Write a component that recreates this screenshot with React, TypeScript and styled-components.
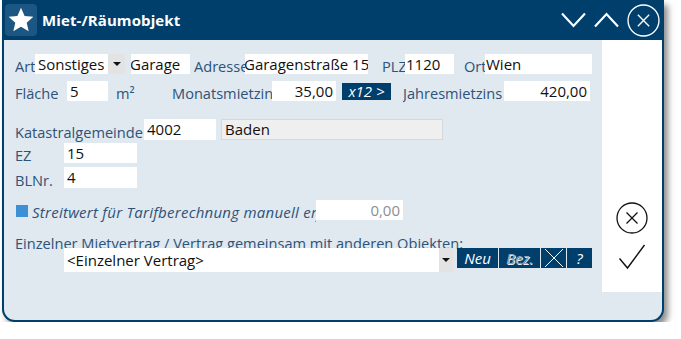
import styled, { createGlobalStyle } from "styled-components";

const GlobalStyle = createGlobalStyle`
  html, body {
    margin: 0;
    padding: 0;
    background: #ffffff;
  }
  body {
    font-family: "Open Sans", "DejaVu Sans", sans-serif;
  }
`;

const Page = styled.div`
  padding: 0 0 0 2px;
`;

const Window = styled.div`
  width: 658px;
  height: 320px;
  display: flex;
  flex-direction: column;
  background: #e0e8f0;
  border: 2px solid #003e6b;
  border-top: 0;
  border-radius: 0 0 13px 13px;
  box-shadow: 4px 5px 6px rgba(0, 0, 0, 0.45);
  overflow: hidden;
`;

const TitleBar = styled.div`
  height: 40px;
  flex: none;
  display: flex;
  align-items: center;
  background: #003e6b;
  padding: 0 2px 0 1px;
  color: #ffffff;
`;

const StarBox = styled.div`
  width: 32px;
  height: 32px;
  border-radius: 4px;
  background: #1c5683;
  display: flex;
  align-items: center;
  justify-content: center;
`;

const Title = styled.h1`
  margin: 0 0 0 5px;
  flex: 1;
  font-size: 15px;
  font-weight: 700;
  letter-spacing: 0.1px;
`;

const Controls = styled.div`
  display: flex;
  align-items: center;
  gap: 8px;
`;

const Body = styled.div`
  flex: 1;
  display: flex;
`;

const Form = styled.div`
  flex: 1;
  padding: 14px 0 0 11px;
  display: flex;
  flex-direction: column;
`;

const Side = styled.div`
  width: 60px;
  height: 252px;
  background: #ffffff;
  display: flex;
  flex-direction: column;
  align-items: center;
  padding-top: 162px;
  box-sizing: border-box;
  gap: 10px;
`;

const Row = styled.div<{ $mt?: number; $h?: number; $top?: boolean }>`
  display: flex;
  align-items: ${p => (p.$top ? "flex-start" : "center")};
  gap: ${p => (p.$top ? "1px" : "0")};
  height: ${p => p.$h ?? 20}px;
  margin-top: ${p => p.$mt ?? 0}px;
`;

const Label = styled.span<{ $w: number; $ml?: number; $italic?: boolean }>`
  width: ${p => p.$w}px;
  margin-left: ${p => p.$ml ?? 0}px;
  flex: none;
  overflow: hidden;
  white-space: nowrap;
  font-size: ${p => (p.$italic ? "15px" : "14.6px")};
  letter-spacing: ${p => (p.$italic ? "0.25px" : "0")};
  line-height: 20px;
  padding-top: 4px;
  color: #2d5378;
  font-style: ${p => (p.$italic ? "italic" : "normal")};
`;

const Field = styled.div<{
  $w: number;
  $ml?: number;
  $right?: boolean;
  $indent?: number;
  $muted?: boolean;
  $dim?: boolean;
  $h?: number;
}>`
  width: ${p => p.$w}px;
  height: ${p => p.$h ?? 20}px;
  margin-left: ${p => p.$ml ?? 0}px;
  flex: none;
  box-sizing: border-box;
  background: ${p => (p.$muted ? "#efefef" : "#ffffff")};
  border: ${p => (p.$muted ? "1px solid #d4d9de" : "0")};
  overflow: hidden;
  white-space: nowrap;
  font-size: 15px;
  line-height: ${p => (p.$h ?? 20) - (p.$muted ? 2 : 0)}px;
  color: ${p => (p.$dim ? "#8a8f95" : "#111111")};
  text-align: ${p => (p.$right ? "right" : "left")};
  padding: 0 3px;
  text-indent: ${p => p.$indent ?? 0}px;
`;

const Select = styled.div<{ $w: number; $h: number; $ml?: number }>`
  width: ${p => p.$w}px;
  height: ${p => p.$h}px;
  line-height: ${p => p.$h}px;
  margin-left: ${p => p.$ml ?? 0}px;
  flex: none;
  display: flex;
  background: #ffffff;
  font-size: 15px;
  color: #111111;
  position: relative;
  z-index: 1;
`;

const SelectText = styled.div`
  flex: 1;
  padding-left: 3px;
  white-space: nowrap;
  overflow: hidden;
`;

const DropButton = styled.div<{ $w: number }>`
  width: ${p => p.$w}px;
  background: #e3e3e3;
  display: flex;
  align-items: center;
  justify-content: center;
  &::after {
    content: "";
    border-left: 4px solid transparent;
    border-right: 4px solid transparent;
    border-top: 4px solid #111111;
  }
`;

const DarkButton = styled.div<{ $w: number; $h?: number; $ml?: number; $disabled?: boolean }>`
  width: ${p => p.$w}px;
  height: ${p => p.$h ?? 20}px;
  margin-left: ${p => p.$ml ?? 0}px;
  flex: none;
  box-sizing: border-box;
  background: #003e6b;
  color: ${p => (p.$disabled ? "#9aa7b5" : "#ffffff")};
  text-shadow: ${p => (p.$disabled ? "1px 1px 0 #e8eef4" : "none")};
  font-size: 15px;
  font-style: italic;
  display: flex;
  align-items: center;
  justify-content: center;
  line-height: 1;
`;

const Marker = styled.span`
  width: 12px;
  height: 12px;
  margin: 2px 4px 0 1px;
  background: #3d8fd6;
  flex: none;
`;

const ContractLabel = styled.div`
  margin-top: 13px;
  height: 15px;
  font-size: 14.6px;
  line-height: 20px;
  color: #2d5378;
  white-space: nowrap;
`;

const SmallIcon = styled.svg`
  display: block;
`;

const Star = () => (
  <SmallIcon width="28" height="28" viewBox="0 0 24 24">
    <path
      d="M12 1.6l3.1 7 7.5.7-5.7 5 1.7 7.4L12 17.8l-6.6 3.9 1.7-7.4-5.7-5 7.5-.7z"
      fill="#ffffff"
    />
  </SmallIcon>
);

const ChevronDown = () => (
  <SmallIcon width="25" height="16" viewBox="0 0 25 16">
    <path d="M1 1.5l11.5 12.5L24 1.5" fill="none" stroke="#ffffff" strokeWidth="2.2" />
  </SmallIcon>
);

const ChevronUp = () => (
  <SmallIcon width="25" height="16" viewBox="0 0 25 16">
    <path d="M1 14.5L12.5 2 24 14.5" fill="none" stroke="#ffffff" strokeWidth="2.2" />
  </SmallIcon>
);

const CircleX = ({ color, size }: { color: string; size: number }) => (
  <SmallIcon width={size} height={size} viewBox="0 0 32 32">
    <circle cx="16" cy="16" r="15" fill="none" stroke={color} strokeWidth="1.3" />
    <path d="M10.5 10.5l11 11M21.5 10.5l-11 11" stroke={color} strokeWidth="1.3" />
  </SmallIcon>
);

const Check = () => (
  <SmallIcon width="28" height="26" viewBox="0 0 28 26">
    <path d="M1.5 14.5l8 9.5L26.5 1" fill="none" stroke="#111111" strokeWidth="1.4" />
  </SmallIcon>
);

const Cross = () => (
  <SmallIcon width="24" height="20" viewBox="0 0 24 20">
    <path d="M3 1l18 18M21 1L3 19" stroke="#ffffff" strokeWidth="1" />
  </SmallIcon>
);

export default function App() {
  return (
    <Page>
      <GlobalStyle />
      <Window>
        <TitleBar>
          <StarBox>
            <Star />
          </StarBox>
          <Title>Miet-/Räumobjekt</Title>
          <Controls>
            <ChevronDown />
            <ChevronUp />
            <CircleX color="#ffffff" size={33} />
          </Controls>
        </TitleBar>
        <Body>
          <Form>
            <Row>
              <Label $w={20}>Art</Label>
              <Select $w={90} $h={20}>
                <SelectText>Sonstiges</SelectText>
                <DropButton $w={17} />
              </Select>
              <Field $w={59} $ml={6} $indent={-4}>Garage</Field>
              <Label $w={51} $ml={4}>Adresse</Label>
              <Field $w={123} $indent={-4}>Garagenstraße 15</Field>
              <Label $w={23} $ml={14}>PLZ</Label>
              <Field $w={49} $indent={-2}>1120</Field>
              <Label $w={21} $ml={10}>Ort</Label>
              <Field $w={107} $indent={-2}>Wien</Field>
            </Row>
            <Row $mt={7}>
              <Label $w={52}>Fläche</Label>
              <Field $w={41}>5</Field>
              <Label $w={56} $ml={8}>m²</Label>
              <Label $w={100}>Monatsmietzins</Label>
              <Field $w={64} $right>35,00</Field>
              <DarkButton $w={49} $h={17} $ml={6}>x12 &gt;</DarkButton>
              <Label $w={101} $ml={12}>Jahresmietzins</Label>
              <Field $w={86} $right>420,00</Field>
            </Row>
            <Row $mt={18} $h={21}>
              <Label $w={129}>Katastralgemeinde</Label>
              <Field $w={72} $h={21}>4002</Field>
              <Field $w={222} $h={21} $ml={5} $muted>Baden</Field>
            </Row>
            <Row $mt={3}>
              <Label $w={49}>EZ</Label>
              <Field $w={73}>15</Field>
            </Row>
            <Row $mt={4} $h={21}>
              <Label $w={49}>BLNr.</Label>
              <Field $w={73} $h={21}>4</Field>
            </Row>
            <Row $mt={12}>
              <Marker />
              <Label $w={284} $italic>
                Streitwert für Tarifberechnung manuell erfassen
              </Label>
              <Field $w={87} $right $dim>0,00</Field>
            </Row>
            <ContractLabel>Einzelner Mietvertrag / Vertrag gemeinsam mit anderen Objekten:</ContractLabel>
            <Row $h={24}>
              <Select $w={389} $h={24} $ml={49}>
                <SelectText>&lt;Einzelner Vertrag&gt;</SelectText>
                <DropButton $w={14} />
              </Select>
              <Row $h={24} $top>
                <DarkButton $w={41} $ml={4}>Neu</DarkButton>
                <DarkButton $w={41} $disabled>Bez.</DarkButton>
                <DarkButton $w={25}>
                  <Cross />
                </DarkButton>
                <DarkButton $w={25}>?</DarkButton>
              </Row>
            </Row>
          </Form>
          <Side>
            <CircleX color="#111111" size={32} />
            <Check />
          </Side>
        </Body>
      </Window>
    </Page>
  );
}
